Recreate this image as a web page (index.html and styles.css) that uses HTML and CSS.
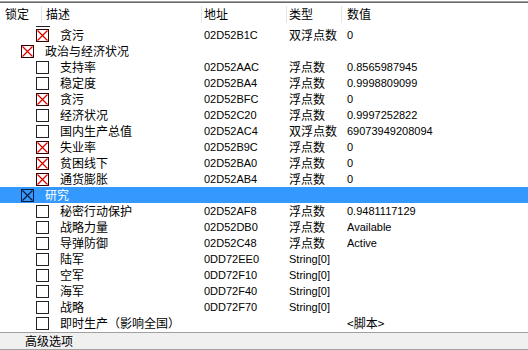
FILE: index.html
```html
<!DOCTYPE html>
<html lang="zh">
<head>
<meta charset="utf-8">
<link rel="stylesheet" href="styles.css">
</head>
<body>
<div class="frame">
  <div class="header">
    <div class="h h-lock">锁定</div>
    <div class="h h-desc">描述</div>
    <div class="h h-addr">地址</div>
    <div class="h h-type">类型</div>
    <div class="h h-val">数值</div>
  </div>
  <div class="list">
    <div class="row l1 first"><span class="tree"><svg class="cb" viewBox="0 0 13 13"><rect x=".5" y=".5" width="12" height="12" fill="#fff" stroke="#3a0000"/><path d="M1.5 1.5L11.5 11.5M11.5 1.5L1.5 11.5" stroke="#e00000" stroke-width="1.3"/></svg><span class="desc">贪污</span></span><span class="addr">02D52B1C</span><span class="type">双浮点数</span><span class="val">0</span></div>
    <div class="row l0"><span class="tree"><svg class="cb" viewBox="0 0 13 13"><rect x=".5" y=".5" width="12" height="12" fill="#fff" stroke="#3a0000"/><path d="M1.5 1.5L11.5 11.5M11.5 1.5L1.5 11.5" stroke="#e00000" stroke-width="1.3"/></svg><span class="desc">政治与经济状况</span></span><span class="addr"></span><span class="type"></span><span class="val"></span></div>
    <div class="row l1"><span class="tree"><span class="box"></span><span class="desc">支持率</span></span><span class="addr">02D52AAC</span><span class="type">浮点数</span><span class="val">0.8565987945</span></div>
    <div class="row l1"><span class="tree"><span class="box"></span><span class="desc">稳定度</span></span><span class="addr">02D52BA4</span><span class="type">浮点数</span><span class="val">0.9998809099</span></div>
    <div class="row l1"><span class="tree"><svg class="cb" viewBox="0 0 13 13"><rect x=".5" y=".5" width="12" height="12" fill="#fff" stroke="#3a0000"/><path d="M1.5 1.5L11.5 11.5M11.5 1.5L1.5 11.5" stroke="#e00000" stroke-width="1.3"/></svg><span class="desc">贪污</span></span><span class="addr">02D52BFC</span><span class="type">浮点数</span><span class="val">0</span></div>
    <div class="row l1"><span class="tree"><span class="box"></span><span class="desc">经济状况</span></span><span class="addr">02D52C20</span><span class="type">浮点数</span><span class="val">0.9997252822</span></div>
    <div class="row l1"><span class="tree"><span class="box"></span><span class="desc">国内生产总值</span></span><span class="addr">02D52AC4</span><span class="type">双浮点数</span><span class="val">69073949208094</span></div>
    <div class="row l1"><span class="tree"><svg class="cb" viewBox="0 0 13 13"><rect x=".5" y=".5" width="12" height="12" fill="#fff" stroke="#3a0000"/><path d="M1.5 1.5L11.5 11.5M11.5 1.5L1.5 11.5" stroke="#e00000" stroke-width="1.3"/></svg><span class="desc">失业率</span></span><span class="addr">02D52B9C</span><span class="type">浮点数</span><span class="val">0</span></div>
    <div class="row l1"><span class="tree"><svg class="cb" viewBox="0 0 13 13"><rect x=".5" y=".5" width="12" height="12" fill="#fff" stroke="#3a0000"/><path d="M1.5 1.5L11.5 11.5M11.5 1.5L1.5 11.5" stroke="#e00000" stroke-width="1.3"/></svg><span class="desc">贫困线下</span></span><span class="addr">02D52BA0</span><span class="type">浮点数</span><span class="val">0</span></div>
    <div class="row l1"><span class="tree"><svg class="cb" viewBox="0 0 13 13"><rect x=".5" y=".5" width="12" height="12" fill="#fff" stroke="#3a0000"/><path d="M1.5 1.5L11.5 11.5M11.5 1.5L1.5 11.5" stroke="#e00000" stroke-width="1.3"/></svg><span class="desc">通货膨胀</span></span><span class="addr">02D52AB4</span><span class="type">浮点数</span><span class="val">0</span></div>
    <div class="row l0 sel"><span class="tree"><svg class="cb" viewBox="0 0 13 13"><rect x=".5" y=".5" width="12" height="12" fill="none" stroke="#0a1a3a"/><path d="M1.5 1.5L11.5 11.5M11.5 1.5L1.5 11.5" stroke="#0a1a3a" stroke-width="1.2"/></svg><span class="desc">研究</span></span><span class="addr"></span><span class="type"></span><span class="val"></span></div>
    <div class="row l1"><span class="tree"><span class="box"></span><span class="desc">秘密行动保护</span></span><span class="addr">02D52AF8</span><span class="type">浮点数</span><span class="val">0.9481117129</span></div>
    <div class="row l1"><span class="tree"><span class="box"></span><span class="desc">战略力量</span></span><span class="addr">02D52DB0</span><span class="type">浮点数</span><span class="val">Available</span></div>
    <div class="row l1"><span class="tree"><span class="box"></span><span class="desc">导弹防御</span></span><span class="addr">02D52C48</span><span class="type">浮点数</span><span class="val">Active</span></div>
    <div class="row l1"><span class="tree"><span class="box"></span><span class="desc">陆军</span></span><span class="addr">0DD72EE0</span><span class="type lat">String[0]</span><span class="val"></span></div>
    <div class="row l1"><span class="tree"><span class="box"></span><span class="desc">空军</span></span><span class="addr">0DD72F10</span><span class="type lat">String[0]</span><span class="val"></span></div>
    <div class="row l1"><span class="tree"><span class="box"></span><span class="desc">海军</span></span><span class="addr">0DD72F40</span><span class="type lat">String[0]</span><span class="val"></span></div>
    <div class="row l1"><span class="tree"><span class="box"></span><span class="desc">战略</span></span><span class="addr">0DD72F70</span><span class="type lat">String[0]</span><span class="val"></span></div>
    <div class="row l1"><span class="tree"><span class="box"></span><span class="desc">即时生产（影响全国）</span></span><span class="addr"></span><span class="type"></span><span class="val script">&lt;脚本&gt;</span></div>
  </div>
  <div class="footer">高级选项</div>
</div>
</body>
</html>
```
FILE: styles.css
```css
html, body {
  margin: 0;
  padding: 0;
  background: #fff;
}
body {
  width: 528px;
  height: 350px;
  overflow: hidden;
  font-family: "Noto Sans CJK SC", "Liberation Sans", sans-serif;
  font-size: 12px;
  color: #000;
}
.frame {
  margin-top: 1px;
  border-top: 1px solid #a0a0a0;
  height: 349px;
  display: flex;
  flex-direction: column;
}
.header {
  border-top: 1px solid #6a6a6a;
  height: 23px;
  display: grid;
  grid-template-columns: 41px 160px 85px 55px 1fr;
  align-items: center;
}
.h {
  line-height: 16px;
  height: 17px;
  padding-left: 4px;
  border-left: 1px solid #e5e5e5;
}
.h-lock {
  border-left: none;
  padding-left: 5px;
}
.h-addr, .h-type {
  padding-left: 2px;
}
.h-val { padding-left: 5px; }
.list {
  display: flex;
  flex-direction: column;
  padding-top: 1px;
  flex: 1;
}
.row {
  height: 16px;
  display: grid;
  grid-template-columns: 204px 85px 58px 1fr;
  align-items: center;
  line-height: 16px;
  white-space: nowrap;
  position: relative;
}
.tree {
  display: flex;
  align-items: center;
}
.l0 .tree { padding-left: 21px; }
.l1 .tree { padding-left: 36px; }
.cb, .box {
  width: 13px;
  height: 13px;
  flex: none;
  display: block;
  box-sizing: border-box;
}
.box {
  border: 1px solid #222;
  background: #fff;
}
.desc {
  margin-left: 11px;
}
.addr, .val, .lat {
  font-family: "Liberation Sans", "Noto Sans CJK SC", sans-serif;
  font-size: 11px;
}
.val.script {
  font-family: "Noto Sans CJK SC", sans-serif;
  font-size: 12px;
}
.first::before {
  content: "";
  position: absolute;
  left: 36px;
  top: -1px;
  width: 14px;
  height: 1px;
  background: #222;
}
.sel {
  background: #3399ff;
  color: #fff;
}
.footer {
  border-top: 1px solid #a0a0a0;
  border-bottom: 1px solid #a0a0a0;
  background: #f0f0f0;
  height: 16px;
  line-height: 16px;
  padding-left: 25px;
  margin-bottom: 1px;
}
```
